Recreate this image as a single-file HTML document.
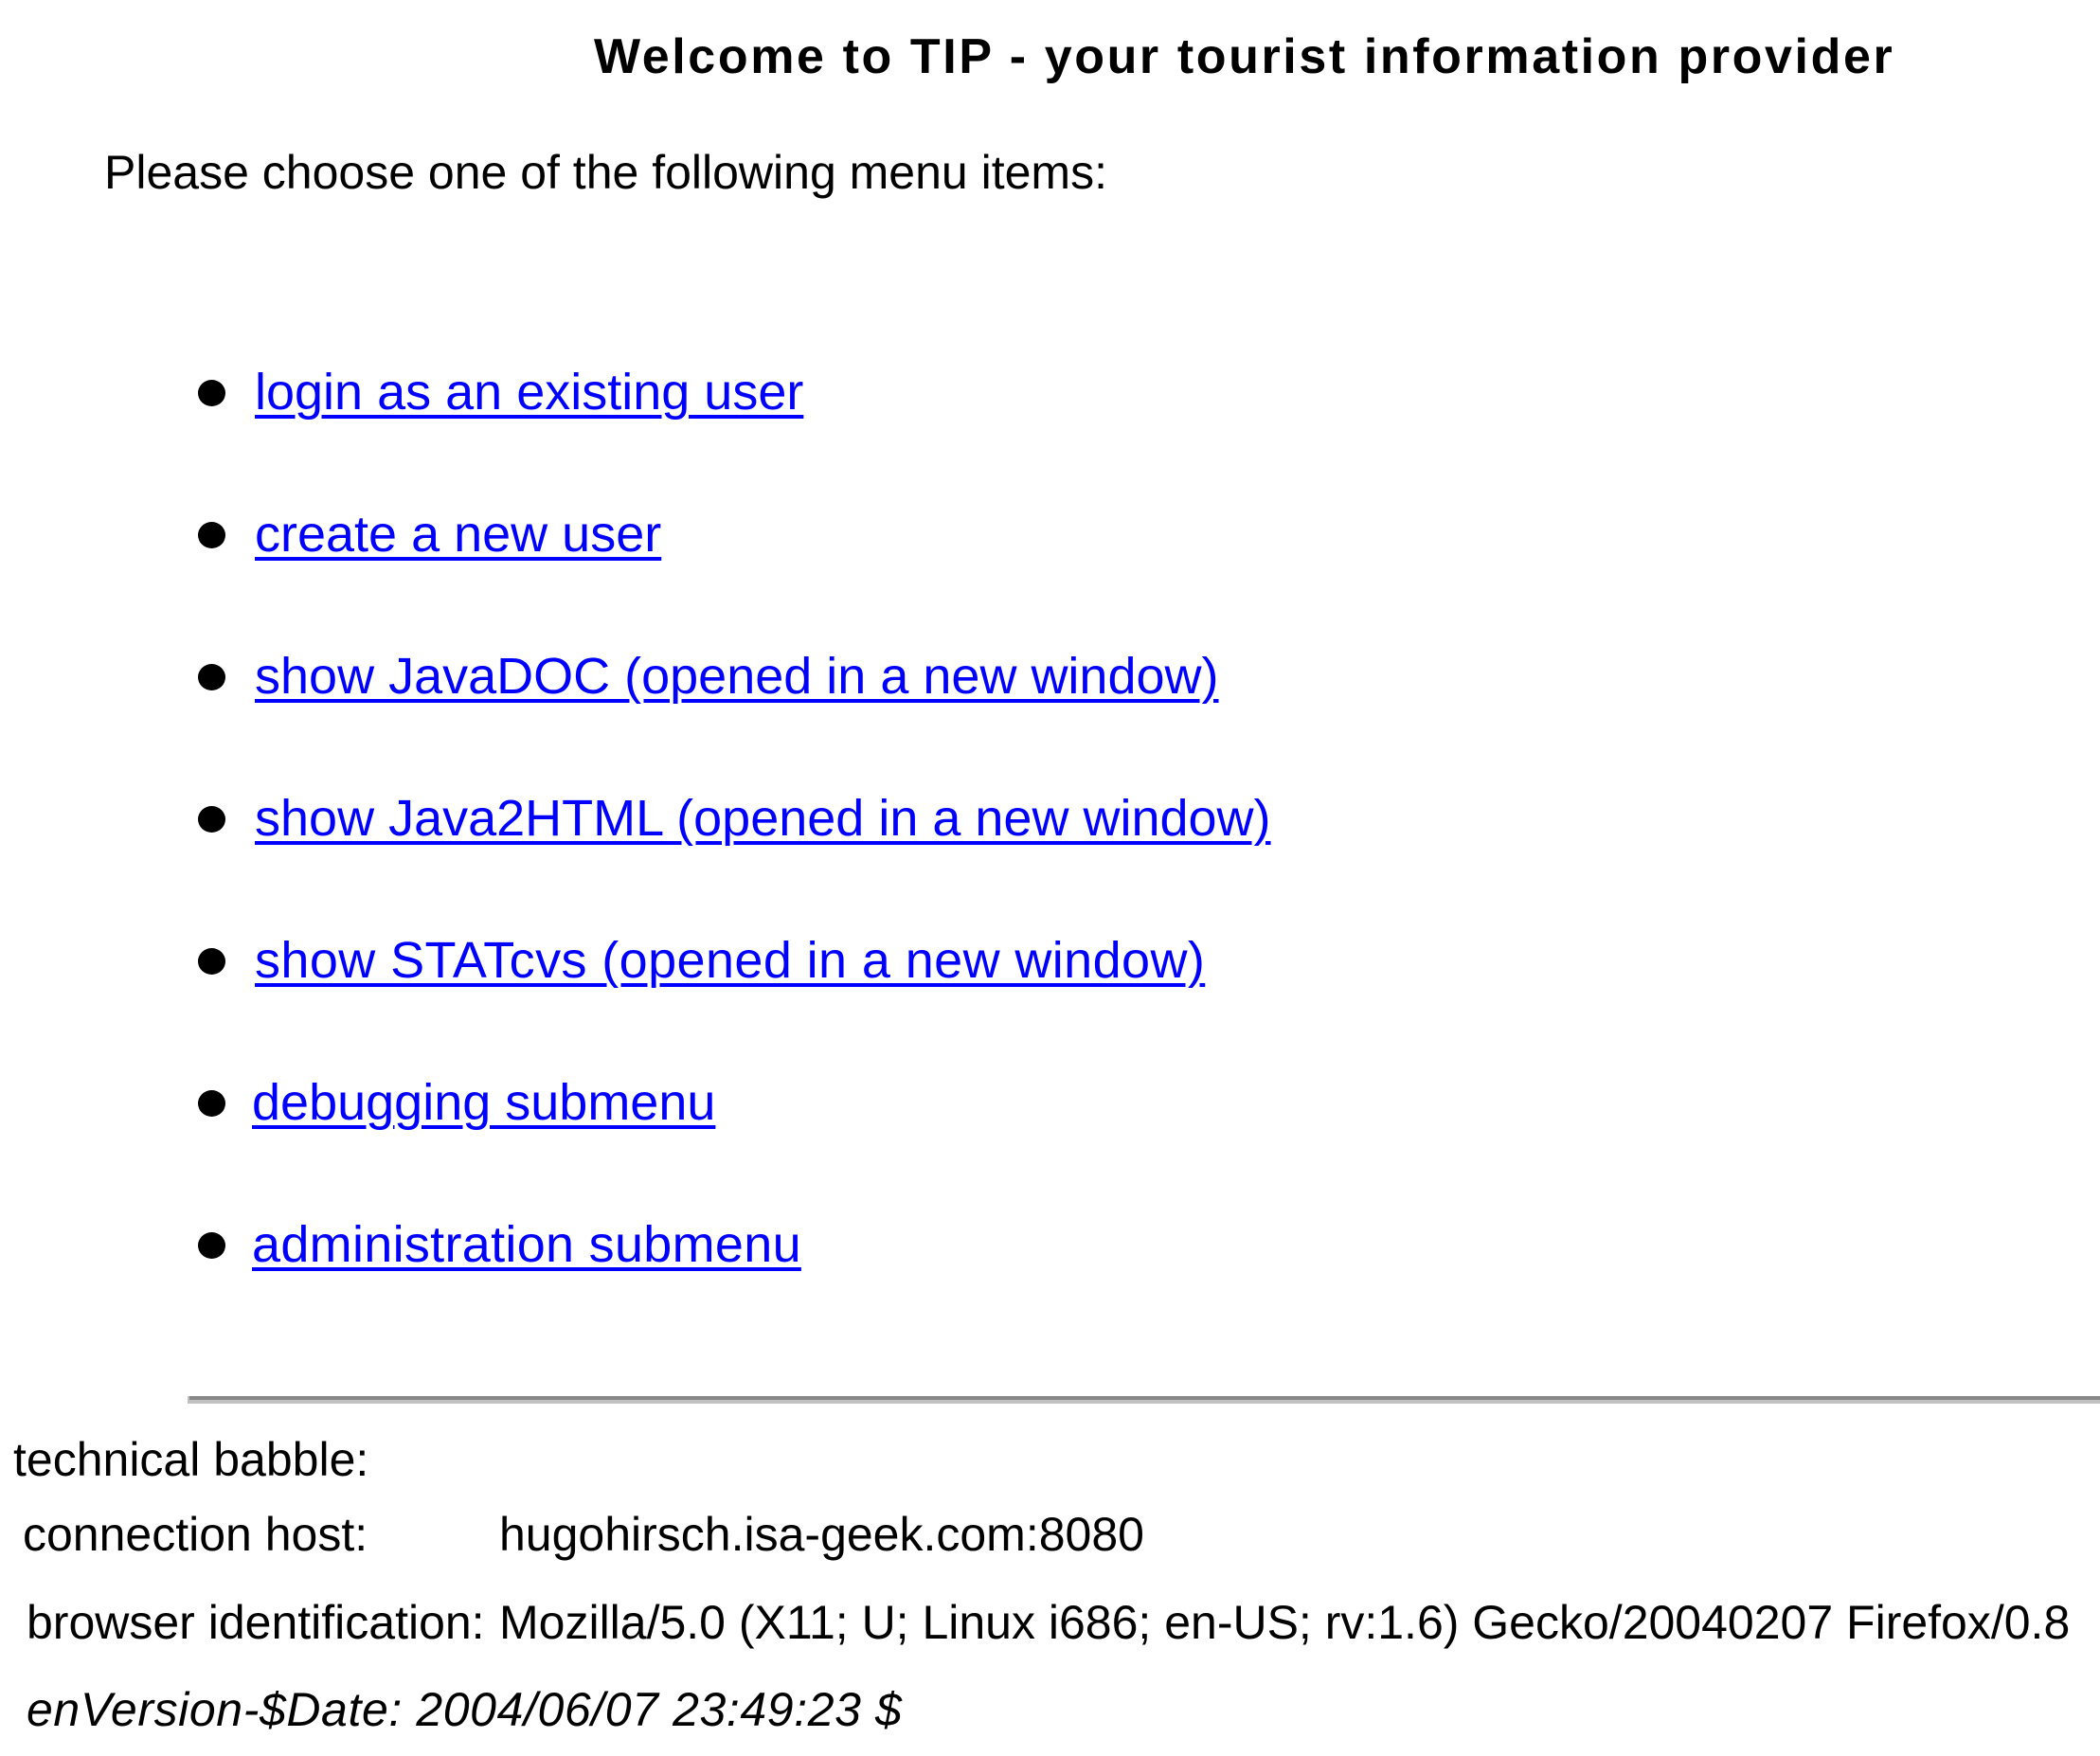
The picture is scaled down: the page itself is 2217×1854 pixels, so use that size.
<!DOCTYPE html>
<html><head><meta charset="utf-8"><style>
body{margin:0;background:#fff;width:2217px;height:1854px;position:relative;overflow:hidden;font-family:"Liberation Sans",Arial,sans-serif;}
.t{position:absolute;white-space:nowrap;line-height:1;}
a{color:#0000ff;text-decoration:underline;text-decoration-thickness:4px;text-underline-offset:6px;}
.b{position:absolute;width:29px;height:28px;border-radius:50%;background:#000;left:209px;}
.l{font-size:54px;left:269px;}
.s{font-size:50px;}
</style></head><body>
<div class="t" style="left:627px;top:34px;font-size:52px;font-weight:bold;letter-spacing:2.6px">Welcome to TIP - your tourist information provider</div>
<div class="t" style="left:110px;top:157px;font-size:50px">Please choose one of the following menu items:</div>

<div class="b" style="top:401px"></div><div class="t l" style="top:387px"><a>login as an existing user</a></div>
<div class="b" style="top:551px"></div><div class="t l" style="top:537px"><a>create a new user</a></div>
<div class="b" style="top:701px"></div><div class="t l" style="top:687px"><a>show JavaDOC (opened in a new window)</a></div>
<div class="b" style="top:851px"></div><div class="t l" style="top:837px"><a>show Java2HTML (opened in a new window)</a></div>
<div class="b" style="top:1001px"></div><div class="t l" style="top:987px;letter-spacing:0.4px"><a>show STATcvs (opened in a new window)</a></div>
<div class="b" style="top:1151px"></div><div class="t l" style="top:1137px;left:266px"><a>debugging submenu</a></div>
<div class="b" style="top:1301px"></div><div class="t l" style="top:1287px;left:266px;letter-spacing:0.3px"><a>administration submenu</a></div>

<div style="position:absolute;left:198px;top:1474px;width:2019px;height:4px;background:#888"></div>
<div style="position:absolute;left:198px;top:1478px;width:2019px;height:4px;background:#c0c0c0"></div>
<div style="position:absolute;left:198px;top:1474px;width:2px;height:8px;background:#c0c0c0"></div>

<div class="t s" style="left:14px;top:1516px">technical babble:</div>
<div class="t s" style="left:24px;top:1595px">connection host:</div>
<div class="t s" style="left:527px;top:1595px">hugohirsch.isa-geek.com:8080</div>
<div class="t s" style="left:28px;top:1688px">browser identification:</div>
<div class="t s" style="left:527px;top:1688px">Mozilla/5.0 (X11; U; Linux i686; en-US; rv:1.6) Gecko/20040207 Firefox/0.8</div>
<div class="t s" style="left:28px;top:1780px;font-style:italic;letter-spacing:0.6px">enVersion-$Date: 2004/06/07 23:49:23 $</div>
</body></html>
